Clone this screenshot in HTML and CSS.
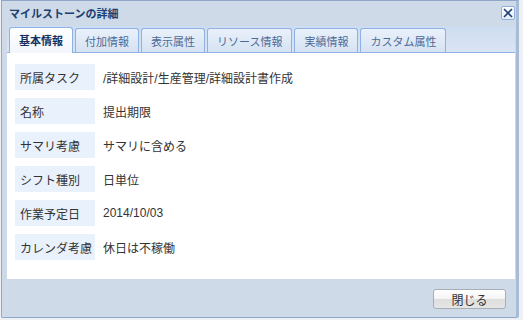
FILE: index.html
```html
<!DOCTYPE html>
<html lang="ja">
<head>
<meta charset="utf-8">
<link rel="stylesheet" href="styles.css">
</head>
<body>
<div class="window">
  <div class="titlebar">
    <span class="title">マイルストーンの詳細</span>
    <span class="close"><svg width="10" height="10" viewBox="0 0 10 10"><path d="M1 1L9 9M9 1L1 9" stroke="#1f3f78" stroke-width="1.6"/></svg></span>
  </div>
  <div class="tabstrip">
    <span class="tab active">基本情報</span>
    <span class="tab">付加情報</span>
    <span class="tab">表示属性</span>
    <span class="tab">リソース情報</span>
    <span class="tab">実績情報</span>
    <span class="tab">カスタム属性</span>
  </div>
  <div class="panel">
    <div class="row"><span class="label">所属タスク</span><span class="value">/詳細設計/生産管理/詳細設計書作成</span></div>
    <div class="row"><span class="label">名称</span><span class="value">提出期限</span></div>
    <div class="row"><span class="label">サマリ考慮</span><span class="value">サマリに含める</span></div>
    <div class="row"><span class="label">シフト種別</span><span class="value">日単位</span></div>
    <div class="row"><span class="label">作業予定日</span><span class="value">2014/10/03</span></div>
    <div class="row"><span class="label">カレンダ考慮</span><span class="value">休日は不稼働</span></div>
  </div>
  <div class="footer">
    <span class="button">閉じる</span>
  </div>
</div>
</body>
</html>
```
FILE: styles.css
```css
html, body {
  margin: 0;
  padding: 0;
}
body {
  background: #eef0f3;
  font-family: "Liberation Sans", "Noto Sans CJK JP", sans-serif;
  width: 523px;
  height: 320px;
  overflow: hidden;
}
.window {
  margin-left: 1px;
  width: 508px;
  height: 316px;
  border: 1px solid #8fa7c9;
  border-right: 3px solid #a9bcd6;
  background: #cfdae8;
  padding: 0 1px 0 5px;
  display: flex;
  flex-direction: column;
  border-radius: 0 0 2px 2px;
}
.titlebar {
  height: 25px;
  display: flex;
  align-items: center;
  justify-content: space-between;
  padding-left: 2px;
}
.title {
  font-size: 11px;
  font-weight: bold;
  color: #1d3f72;
  margin-top: -2px;
}
.close {
  width: 12px;
  height: 12px;
  border: 1px solid #8fb0dc;
  border-radius: 2px;
  background: linear-gradient(#ffffff, #e4ecf8);
  display: flex;
  align-items: center;
  justify-content: center;
  margin-top: -1px;
}
.tabstrip {
  height: 26px;
  background: linear-gradient(#cddcf0, #dae5f4);
  border-bottom: 1px solid #8db2e3;
  display: flex;
  align-items: flex-end;
  gap: 2px;
  padding-left: 2px;
}
.tab {
  height: 24px;
  padding: 0 9px;
  border: 1px solid #8db2e3;
  border-bottom: none;
  border-radius: 3px 3px 0 0;
  background: linear-gradient(#e9f0fa, #d6e3f3);
  font-size: 11px;
  color: #4c6a96;
  display: flex;
  align-items: center;
  box-sizing: border-box;
}
.tab.active {
  height: 26px;
  background: linear-gradient(#ffffff, #f2f6fc);
  color: #15315e;
  font-weight: bold;
  margin-bottom: -1px;
  padding-bottom: 1px;
}
.panel {
  height: 226px;
  background: #ffffff;
  padding: 11px 8px 0 8px;
  box-sizing: border-box;
  display: flex;
  flex-direction: column;
  gap: 8px;
}
.row {
  display: flex;
  align-items: center;
  gap: 8px;
  height: 26px;
}
.label {
  width: 80px;
  height: 26px;
  box-sizing: border-box;
  padding-left: 5px;
  background: #e9f1fc;
  display: flex;
  align-items: center;
  font-size: 12px;
  color: #333333;
  white-space: nowrap;
}
.value {
  font-size: 12px;
  color: #333333;
}
.footer {
  flex: 1;
  display: flex;
  justify-content: flex-end;
  align-items: flex-start;
  padding-top: 10px;
  padding-right: 9px;
}
.button {
  width: 73px;
  height: 20px;
  box-sizing: border-box;
  border: 1px solid #a8aeb6;
  border-radius: 3px;
  background: linear-gradient(#ffffff 0%, #f4f4f4 50%, #dedede 51%, #e6e6e6 100%);
  font-size: 12px;
  color: #333;
  display: flex;
  align-items: center;
  justify-content: center;
}
```
